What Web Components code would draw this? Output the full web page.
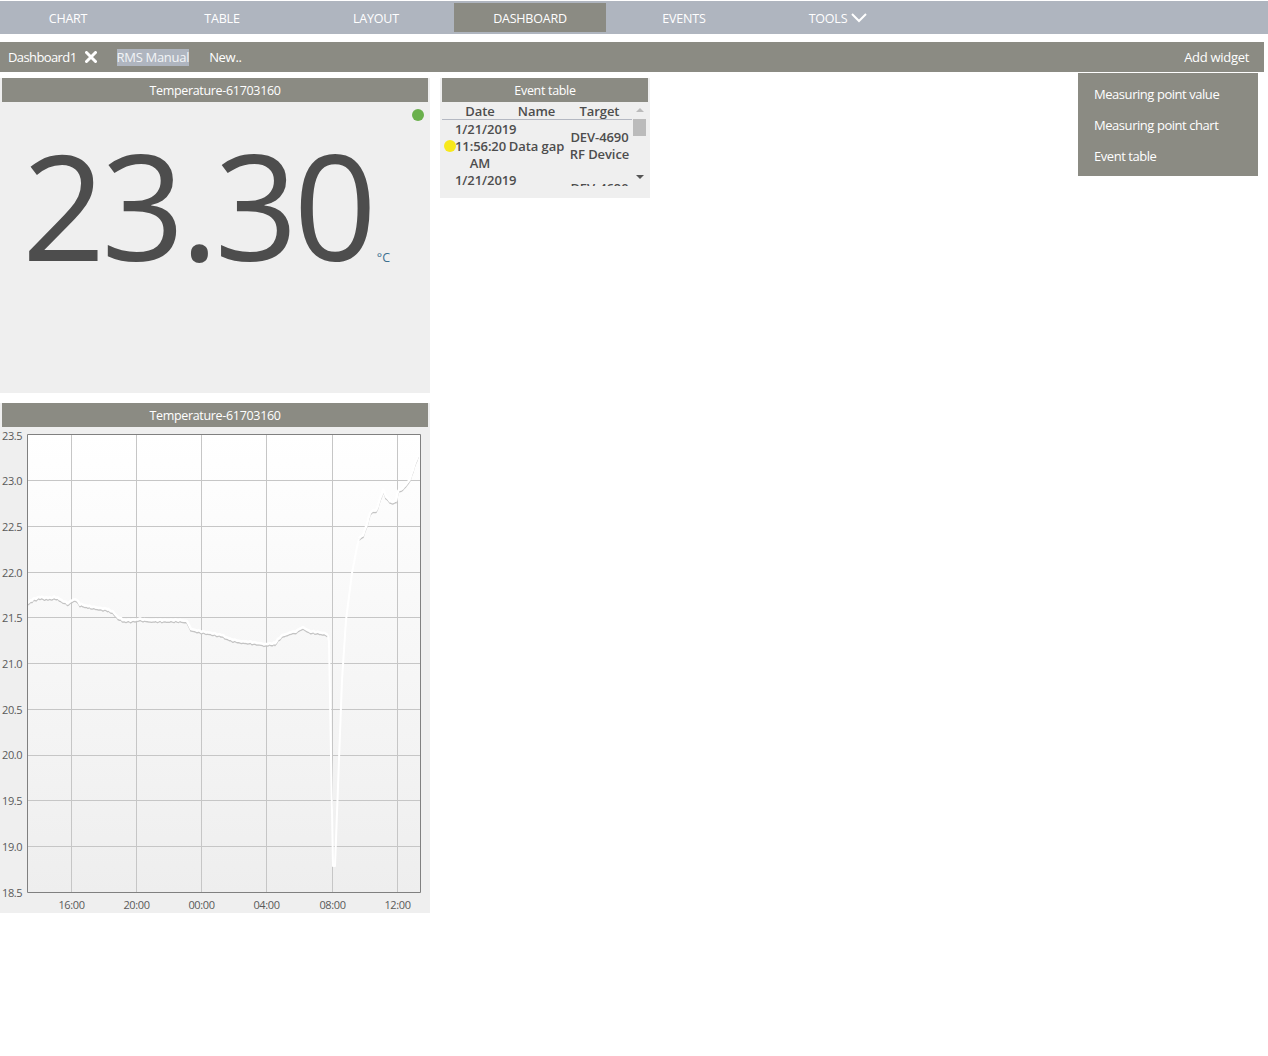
<!DOCTYPE html>
<html lang="en">
<head>
  <meta charset="UTF-8">
  <title>Dashboard</title>
  <style>
    body{
      margin: 0;
      background: #fff;
      font-family: "Open Sans", "Noto Sans", sans-serif;
      font-size: 13px;
      color: #4d4d4d;
    }
    .columns{
      display: flex;
      gap: 10px;
      align-items: flex-start;
      margin-top: 6px;
    }
    .left{
      display: flex;
      flex-direction: column;
      gap: 10px;
      width: 430px;
    }
  </style>
</head>
<body>
  <nav-bar>
    <nav-item>CHART</nav-item>
    <nav-item>TABLE</nav-item>
    <nav-item>LAYOUT</nav-item>
    <nav-item active>DASHBOARD</nav-item>
    <nav-item>EVENTS</nav-item>
    <nav-item chevron>TOOLS</nav-item>
  </nav-bar>
  <dash-toolbar></dash-toolbar>
  <div class="columns">
    <div class="left">
      <dash-widget heading="Temperature-61703160" style="height:315px"><value-tile value="23.30" unit="°C"></value-tile></dash-widget>
      <dash-widget heading="Temperature-61703160" style="height:510px"><temp-chart></temp-chart></dash-widget>
    </div>
    <dash-widget heading="Event table" style="width:210px;height:120px"><event-table></event-table></dash-widget>
  </div>

<script>
  class NavBar extends HTMLElement {
    constructor(){
      super();
      this.attachShadow({mode: 'open'}).innerHTML = `
        <style>
          :host{display:flex;gap:2px;height:33px;margin-top:1px;background:#afb5bf;overflow:hidden;padding:2px 0 2px;box-sizing:border-box}
          ::slotted(:first-child){margin-left:-8px}
        </style>
        <slot></slot>`;
    }
  }
  class NavItem extends HTMLElement {
    constructor(){
      super();
      this.attachShadow({mode: 'open'}).innerHTML = `
        <style>
          :host{display:flex;align-items:center;justify-content:center;gap:4px;width:152px;height:29px;box-sizing:border-box;padding-top:2px;color:#fff;font-size:12.5px;letter-spacing:-.2px}
          :host([active]){background:#8b8b83}
          svg{display:none}
          :host([chevron]) svg{display:block;margin-top:-1px}
        </style>
        <slot></slot>
        <svg width="16" height="10" viewBox="0 0 16 10"><path d="M1 1l7 7 7-7" fill="none" stroke="#fff" stroke-width="2"/></svg>`;
    }
  }
  class DashToolbar extends HTMLElement {
    constructor(){
      super();
      this.attachShadow({mode: 'open'}).innerHTML = `
        <style>
          :host{display:flex;align-items:center;position:relative;height:30px;margin:8px 4px 0 0;padding:0 15px 0 8px;background:#8b8b83;color:#fff;font-size:13px;letter-spacing:-.3px}
          .tab{letter-spacing:-.6px}
          .x{margin:0 20px 0 8px;display:block}
          .sel{background:#afb5bf;color:#f2f4f6;line-height:17px;margin-right:20px}
          .add{margin-left:auto}
          .menu{position:absolute;top:31px;right:6px;width:180px;height:103px;box-sizing:border-box;padding:6px 16px;background:#8b8b83;letter-spacing:-.45px}
          .menu div{height:31px;line-height:31px}
        </style>
        <span class="tab">Dashboard1</span>
        <svg class="x" width="12" height="12" viewBox="0 0 12 12"><path d="M1.5 1.5l9 9M10.5 1.5l-9 9" stroke="#fff" stroke-width="3" stroke-linecap="round"/></svg>
        <span class="sel">RMS Manual</span>
        <span>New..</span>
        <span class="add">Add widget</span>
        <div class="menu">
          <div>Measuring point value</div>
          <div>Measuring point chart</div>
          <div>Event table</div>
        </div>`;
    }
  }
  class DashWidget extends HTMLElement {
    constructor(){
      super();
      this.attachShadow({mode: 'open'}).innerHTML = `
        <style>
          :host{display:block;background:#efefef;box-sizing:border-box;padding:0 2px;overflow:hidden}
          .head{height:24px;line-height:26px;text-align:center;background:#8b8b83;color:#fff;font-size:12.5px;letter-spacing:-.32px}
        </style>
        <div class="head"></div>
        <slot></slot>`;
      this.shadowRoot.querySelector('.head').textContent = this.getAttribute('heading');
    }
  }
  class ValueTile extends HTMLElement {
    constructor(){
      super();
      this.attachShadow({mode: 'open'}).innerHTML = `
        <style>
          :host{display:block;position:relative;white-space:nowrap;padding-left:20px;height:200px}
          .dot{position:absolute;top:7px;right:4px;width:12px;height:12px;border-radius:50%;background:#6ab04c}
          .val{font-size:146px;font-weight:385;line-height:206px;letter-spacing:-4.3px;color:#4d4d4d}
          .unit{font-size:12.5px;color:#3d6f8f;margin-left:4px;position:relative;top:1px}
        </style>
        <div class="dot"></div>
        <span class="val"></span><span class="unit"></span>`;
      this.shadowRoot.querySelector('.val').textContent = this.getAttribute('value');
      this.shadowRoot.querySelector('.unit').textContent = this.getAttribute('unit');
    }
  }
  class EventTable extends HTMLElement {
    constructor(){
      super();
      const row = `
        <div class="row">
          <div class="c-dot"><i></i></div>
          <div>1/21/2019<br>11:56:20<br>AM</div>
          <div>Data gap</div>
          <div class="target">DEV-4690<br>RF Device</div>
        </div>`;
      this.attachShadow({mode: 'open'}).innerHTML = `
        <style>
          :host{display:flex;height:84px;font-size:13px;font-weight:600;color:#4d4d4d;line-height:17px;white-space:nowrap;letter-spacing:-.08px}
          .main{width:190px;overflow:hidden}
          .row,.hd{display:grid;grid-template-columns:13px 50px 63px 63px;text-align:center}
          .hd{height:17px;line-height:19px;border-bottom:1px solid #b4b8c2;margin-bottom:1px}
          .row{align-items:center;height:51px}
          .target{padding-bottom:2px}
          .c-dot i{display:block;width:12px;height:12px;border-radius:50%;background:#f7e81b;margin-left:2px;margin-top:-1px}
          .bar{width:15px;position:relative}
          .up,.down{position:absolute;left:4px;width:0;height:0;border:4px solid transparent}
          .up{top:2px;border-bottom-color:#bbb}
          .down{top:73px;border-top-color:#555}
          .thumb{position:absolute;top:17px;left:1px;width:13px;height:17px;background:#bbb}
        </style>
        <div class="main">
          <div class="hd"><div></div><div>Date</div><div>Name</div><div>Target</div></div>
          ${row}${row}
        </div>
        <div class="bar"><div class="up"></div><div class="thumb"></div><div class="down"></div></div>`;
    }
  }
  class TempChart extends HTMLElement {
    constructor(){
      super();
      // svg origin is page (0,427)
      const X0 = 27.5, X1 = 420.5, Y0 = 7.5, Y1 = 465.5;
      const ys = [[53.5,'23.0',4],[99.5,'22.5',4],[145.5,'22.0',4],[190.5,'21.5',4],[236.5,'21.0',4],[282.5,'20.5',4],[328.5,'20.0',3],[373.5,'19.5',4],[419.5,'19.0',4]];
      const xs = [[71.5,'16:00'],[136.5,'20:00'],[201.5,'00:00'],[266.5,'04:00'],[332.5,'08:00'],[397.5,'12:00']];
      const before = [[27,177],[29,176],[33,173],[40,171],[48,172],[55,171],[60,173],[63,175],[68,177],[72,174],[76,173],[80,178],[88,180],[100,182],[108,183],[113,186],[118,191],[123,194],[132,194],[140,193],[150,194],[165,194],[180,194],[187,195],[191,203],[200,205],[212,207],[222,209],[230,213],[240,215],[252,216],[265,218],[275,217],[281,210],[288,207],[296,205],[303,201],[309,205],[318,206],[328,208]];
      const spike = [[328,208],[329,215],[333,439],[335,439],[342,253],[346,193],[352,146],[357,120],[359,112]];
      const after = [[359,112],[363,109],[367,98],[370,87],[373,84],[376,85],[380,73],[383,64],[387,72],[392,76],[396,75],[398,65],[404,61],[410,53],[414,40],[418,29]];
      // measured trace is noisy, roughen the hand-read points
      const rough = list => {
        const out = [];
        list.forEach((p, i) => {
          const n = list[i + 1];
          if (!n) { out.push(p); return; }
          for (let x = p[0]; x < n[0]; x += 1.5) {
            const t = (x - p[0]) / (n[0] - p[0]);
            const j = Math.sin(x * 2.3) * Math.cos(x * 0.7) * 0.8;
            out.push([x, +(p[1] + (n[1] - p[1]) * t + j).toFixed(1)]);
          }
        });
        return out.map(q => q.join(',')).join(' ');
      };
      const line = (list, cls) => `<polyline class="${cls}" points="${list}"/>`;
      const b = rough(before), a = rough(after), s = spike.map(q => q.join(',')).join(' ');
      let grid = '', labels = '';
      ys.forEach(([y, t, d]) => {
        grid += `<line x1="${X0}" x2="${X1}" y1="${y}" y2="${y}"/>`;
        labels += `<text x="2" y="${y + d}">${t}</text>`;
      });
      xs.forEach(([x, t]) => {
        grid += `<line x1="${x}" x2="${x}" y1="${Y0}" y2="${Y1}"/>`;
        labels += `<text x="${x}" y="482" text-anchor="middle">${t}</text>`;
      });
      this.attachShadow({mode: 'open'}).innerHTML = `
        <style>
          :host{display:block;margin-left:-2px}
          svg{display:block}
          text{font-size:11px;fill:#5a5a5a;letter-spacing:-.4px}
          .grid line{stroke:#c6c6c6;stroke-width:1}
          polyline{fill:none;stroke-linejoin:round}
          .shade{stroke:#c4c4c4;stroke-width:1.5;transform:translateY(1px)}
          .trace{stroke:#fff;stroke-width:2.5;transform:translateY(-1px)}
          .spike{stroke:#fff;stroke-width:2}
        </style>
        <svg width="430" height="486">
          <defs>
            <linearGradient id="bg" x1="0" x2="0" y1="0" y2="1">
              <stop offset="0" stop-color="#fff"/>
              <stop offset="1" stop-color="#eee"/>
            </linearGradient>
          </defs>
          <rect x="${X0}" y="${Y0}" width="${X1 - X0}" height="${Y1 - Y0}" fill="url(#bg)"/>
          <g class="grid">${grid}</g>
          ${line(b, 'shade')}${line(a, 'shade')}
          ${line(b, 'trace')}${line(a, 'trace')}
          ${line(s, 'spike')}
          <path d="M${X0} ${Y0}H${X1}V${Y1}H${X0}Z" fill="none" stroke="#808080"/>
          ${labels}
          <text x="2" y="13">23.5</text>
          <text x="2" y="470">18.5</text>
        </svg>`;
    }
  }
  customElements.define('nav-bar', NavBar);
  customElements.define('nav-item', NavItem);
  customElements.define('dash-toolbar', DashToolbar);
  customElements.define('dash-widget', DashWidget);
  customElements.define('value-tile', ValueTile);
  customElements.define('event-table', EventTable);
  customElements.define('temp-chart', TempChart);
</script>
</body>
</html>
